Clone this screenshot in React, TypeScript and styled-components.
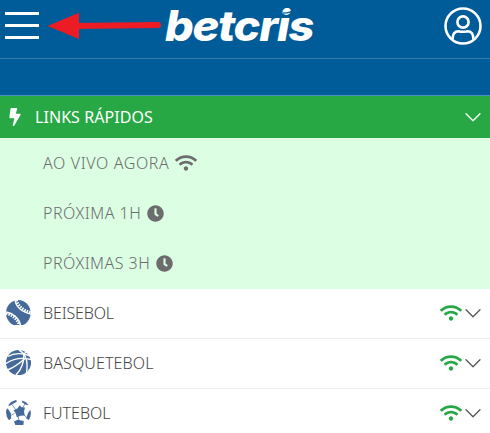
import React from "react";
import styled, { createGlobalStyle } from "styled-components";
import { FaBolt, FaClock, FaWifi } from "react-icons/fa";

const GlobalStyle = createGlobalStyle`
  * { box-sizing: border-box; }
  body {
    margin: 0;
    background: #fff;
    font-family: "Noto Sans", "Open Sans", sans-serif;
    font-size: 16px;
    overflow: hidden;
  }
  svg { display: block; flex: none; }
`;

const Page = styled.div`
  width: 490px;
  height: 433px;
  overflow: hidden;
`;

const Header = styled.header`
  display: flex;
  position: relative;
  height: 59px;
  background: #005c99;
  border-bottom: 1px solid #3380b3;
`;

const MenuButton = styled.div`
  display: flex;
  flex-direction: column;
  justify-content: space-between;
  width: 34px;
  height: 27px;
  margin: 12px 0 0 5px;
`;

const MenuLine = styled.span`
  height: 3px;
  background: #fff;
`;

const Arrow = styled.svg`
  position: absolute;
  left: 46px;
  top: 10px;
`;

const Logo = styled.div`
  position: absolute;
  left: 165px;
  top: 0;
  color: #fff;
  font: italic 850 42px/52px "Inter", sans-serif;
  letter-spacing: -1.2px;
  white-space: nowrap;
  transform: scaleX(1.075);
  transform-origin: left;
`;

const LogoSwoosh = styled.svg`
  position: absolute;
  left: 283px;
  top: 6px;
`;

const Account = styled.svg`
  margin: 7px 8px 0 auto;
`;

const SubHeader = styled.div`
  height: 37px;
  background: #005c99;
  border-bottom: 1px solid #4a91bd;
`;

const QuickHeader = styled.div`
  display: flex;
  align-items: center;
  height: 42px;
  padding: 0 9px 0 6px;
  background: #28a745;
  color: #fff;
`;

const QuickIcon = styled.span`
  width: 29px;
`;

const Label = styled.span<{ $spacing: number; $weight?: number }>`
  font-weight: ${(p) => p.$weight ?? 360};
  letter-spacing: ${(p) => p.$spacing}px;
  line-height: 24px;
  white-space: nowrap;
`;

const Grow = styled.span`
  flex: 1;
`;

const QuickList = styled.div`
  height: 151px;
  background: #dcffe4;
  color: #6c6c6c;
`;

const QuickRow = styled.div`
  display: flex;
  align-items: center;
  gap: 6px;
  height: 50px;
  padding-left: 43px;
`;

const SportRow = styled.div`
  display: flex;
  align-items: center;
  height: 50px;
  padding: 0 9px 2px 6px;
  border-bottom: 1px solid #eeeeee;
  color: #444;
  &:last-child { border-bottom-color: transparent; }
`;

const BallSlot = styled.span`
  width: 37px;
`;

const Live = styled.span`
  margin-right: 3px;
  color: #28a745;
`;

const Chevron = ({ color }: { color: string }) => (
  <svg width="16" height="16" viewBox="0 0 16 16" fill="none" stroke={color} strokeWidth="1.3" strokeLinecap="round" strokeLinejoin="round">
    <path d="M1 4.7 8 11.7 15 4.7" />
  </svg>
);

const Baseball = () => (
  <svg width="25" height="25" viewBox="0 0 25 25">
    <ellipse cx="12.3" cy="13" rx="12.3" ry="13" fill="#456a9a" />
    <g fill="none" stroke="#fff">
      <path d="M9 0C10 7 16 12 25 14" strokeWidth="1.4" />
      <path d="M10.5 0C12 6 17 10.5 25 12.5" strokeWidth="2.8" strokeDasharray="1.5 1.1" />
      <path d="M0 12C7 13 13 18 14.5 25" strokeWidth="1.4" />
      <path d="M0 13.5C6 14.5 11.5 19 13 25" strokeWidth="2.8" strokeDasharray="1.5 1.1" />
    </g>
  </svg>
);

const Basketball = () => (
  <svg width="25" height="25" viewBox="0 0 25 25">
    <circle cx="12.5" cy="12.6" r="12.6" fill="#456a9a" />
    <g fill="none" stroke="#fff" strokeWidth="1.4">
      <path d="M2 6.5C8 3 17 2.5 24 6" />
      <path d="M0 13.5C6 9.5 15 7 25 9.5" />
      <path d="M13 0C19 3 22.5 10 20.5 23" />
      <path d="M17.8 3C18.5 12 14.5 20 10 25" />
      <path d="M19 8.5C14 13 9 17 1.5 20" />
      <path d="M17.5 4 21.5 1.5" />
    </g>
  </svg>
);

const Football = () => (
  <svg width="25" height="25" viewBox="0 0 25 25" fill="#456a9a">
    <path d="M13.8 5.3 15.5 7.2 19 7.5 18 11.5 18.8 15.6 14.2 15.8 11 17.5 9.6 13.3 7.5 10.2 11.3 8.6Z" />
    <path d="M2.6 5Q5 1 10.2.1L10.8 1.8 5.8 4.6 2.7 6.3Z" />
    <path d="M15.8.6Q20 1.6 22.6 5L20.5 5 16.5 2.8Z" />
    <path d="M.3 10Q.7 8.4 1.8 8.5L4.8 13.2 5.2 18.5 3 20.2Q-.8 15.5.3 10Z" />
    <path d="M24.3 9.7Q25.9 15 22.8 20L20.2 18.4 22 13Z" />
    <path d="M8 21.5 11.5 19.8 17.8 21 17.4 25H9.3Z" />
    <path d="m6 4.5 3.8 5.2M16.5 8l2.8-4.7M18 15l3.4 3M12.4 16.7l.4 4M8.5 13.5l-4.2 2.2" fill="none" stroke="#456a9a" strokeWidth=".7" />
  </svg>
);

const quickLinks = [
  { text: "AO VIVO AGORA", spacing: 0.62, icon: <FaWifi size={22} /> },
  { text: "PRÓXIMA 1H", spacing: 0.5, icon: <FaClock size={17} /> },
  { text: "PRÓXIMAS 3H", spacing: 0.47, icon: <FaClock size={17} /> },
];

const sports = [
  { text: "BEISEBOL", spacing: -0.15, ball: <Baseball /> },
  { text: "BASQUETEBOL", spacing: 0.12, ball: <Basketball /> },
  { text: "FUTEBOL", spacing: -0.02, ball: <Football /> },
];

export default function App() {
  return (
    <Page>
      <GlobalStyle />
      <Header>
        <MenuButton>
          <MenuLine />
          <MenuLine />
          <MenuLine />
        </MenuButton>
        <Arrow width="117" height="32" viewBox="0 0 117 32">
          <path d="M28 16 112 15" stroke="#ed1c24" strokeWidth="6" strokeLinecap="round" />
          <path d="M1.5 16 33 2.7V29Z" fill="#ed1c24" />
        </Arrow>
        <Logo>betcris</Logo>
        <LogoSwoosh width="14" height="12" viewBox="0 0 14 12">
          <path d="M0 7.2Q8 7 12 3" fill="none" stroke="#005c99" strokeWidth="1.2" />
        </LogoSwoosh>
        <Account width="38" height="38" viewBox="0 0 38 38" fill="none" stroke="#fff" strokeWidth="2.6">
          <circle cx="19" cy="19" r="17.5" />
          <circle cx="19" cy="15" r="5.6" />
          <path d="M8.5 32.5C8.5 26 11 24.2 14.5 24.2Q19 25.4 23.5 24.2C27 24.2 29.5 26 29.5 32.5" />
        </Account>
      </Header>
      <SubHeader />
      <QuickHeader>
        <QuickIcon><FaBolt size={18} /></QuickIcon>
        <Label $spacing={0.06} $weight={400}>LINKS RÁPIDOS</Label>
        <Grow />
        <Chevron color="#fff" />
      </QuickHeader>
      <QuickList>
        {quickLinks.map((q) => (
          <QuickRow key={q.text}>
            <Label $spacing={q.spacing}>{q.text}</Label>
            {q.icon}
          </QuickRow>
        ))}
      </QuickList>
      {sports.map((s) => (
        <SportRow key={s.text}>
          <BallSlot>{s.ball}</BallSlot>
          <Label $spacing={s.spacing}>{s.text}</Label>
          <Grow />
          <Live><FaWifi size={22} /></Live>
          <Chevron color="#555" />
        </SportRow>
      ))}
    </Page>
  );
}
